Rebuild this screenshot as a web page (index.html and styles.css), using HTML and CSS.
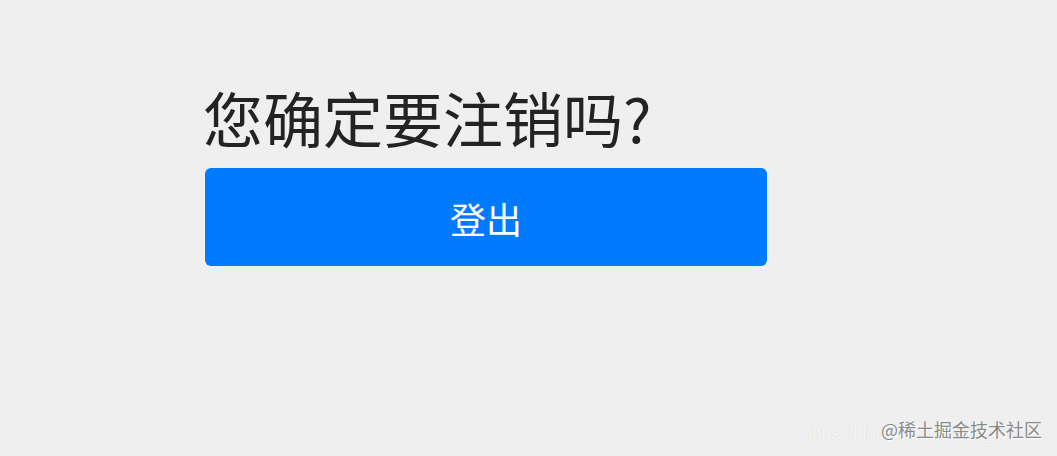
FILE: index.html
```html
<!DOCTYPE html>
<html lang="zh">
<head>
<meta charset="utf-8">
<link rel="stylesheet" href="styles.css">
</head>
<body>
<main class="page">
  <h1 class="title">您确定要注销吗?</h1>
  <button class="btn-logout" type="button">登出</button>
</main>
<div class="watermark">
  <span class="wm-url">https://blog.csdn.net/m0_4637</span>
  <span class="wm-brand">@稀土掘金技术社区</span>
</div>
</body>
</html>
```
FILE: styles.css
```css
html, body {
  margin: 0;
  padding: 0;
  height: 100%;
}
body {
  background: #efefef;
  font-family: "Noto Sans CJK SC", "Noto Sans", sans-serif;
  color: #222;
  position: relative;
  overflow: hidden;
}
.page {
  padding: 81px 0 0 203px;
  display: flex;
  flex-direction: column;
  align-items: flex-start;
}
.title {
  margin: 0;
  font-size: 60px;
  font-weight: 400;
  line-height: 72px;
  color: #232323;
}
.btn-logout {
  margin: 15px 0 0 2px;
  width: 562px;
  height: 98px;
  border: none;
  border-radius: 6px;
  background: #007bff;
  color: #fff;
  font-family: "Noto Sans CJK SC", sans-serif;
  font-size: 36px;
  line-height: 1;
  padding: 2px 0 0 0;
}
.watermark {
  position: absolute;
  right: 0;
  bottom: 8px;
  width: 260px;
  height: 30px;
}
.wm-url {
  position: absolute;
  left: 6px;
  top: 7px;
  font-family: "Liberation Sans", sans-serif;
  font-size: 16px;
  letter-spacing: 0.3px;
  color: #f9f9f9;
  text-shadow: 0 0 1px #cfcfcf;
  white-space: nowrap;
}
.wm-brand {
  position: absolute;
  left: 84px;
  top: -2px;
  font-family: "Noto Sans CJK SC", sans-serif;
  font-size: 18px;
  color: #8a8a8a;
  text-shadow: 1px 1px 1px #ffffff;
  white-space: nowrap;
}
```
